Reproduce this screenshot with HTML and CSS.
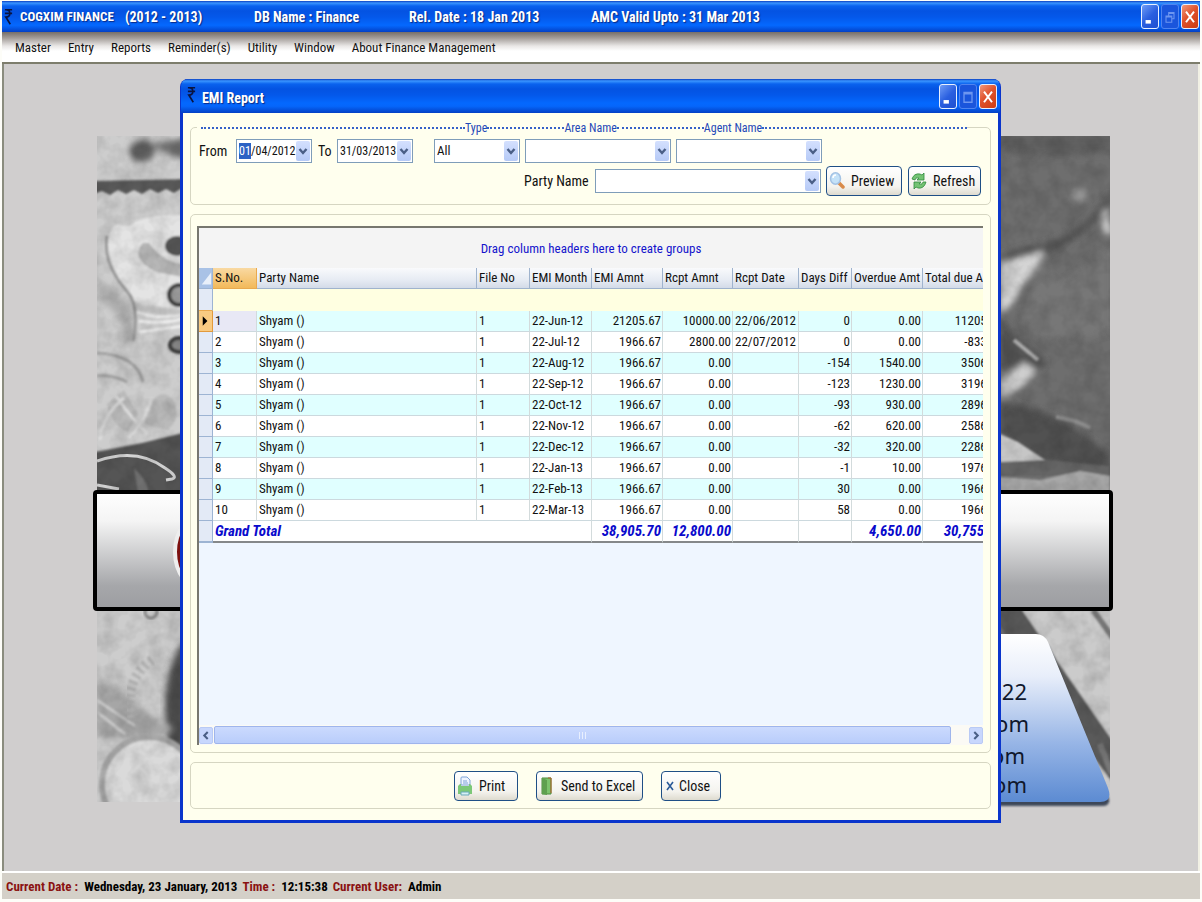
FILE: index.html
```html
<!DOCTYPE html>
<html lang="en">
<head>
<meta charset="utf-8">
<title>COGXIM FINANCE - EMI Report</title>
<link rel="stylesheet" href="styles.css">
</head>
<body>
<svg class="defs" aria-hidden="true">
  <symbol id="rupee" viewBox="0 0 10 20"><path d="M1 2h8M1 6h8M2 2c6 0 6 8 0 8l5 8" fill="none" stroke="currentColor" stroke-width="1.8"/></symbol>
  <symbol id="min" viewBox="0 0 18 24"><path d="M4 16h6v4H4z" fill="#fff"/></symbol>
  <symbol id="max" viewBox="0 0 18 24"><path d="M4.500 7.500h9v11h-9zM4.500 9h9" fill="none" stroke="#6d96f0" stroke-width="1.500"/></symbol>
  <symbol id="restore" viewBox="0 0 18 24"><path d="M7.500 11V7.500h6v7H11M4.500 11.500H11v7H4.500zM4.500 12.500H11M7.500 8.500h6" fill="none" stroke="#6d96f0" stroke-width="1.200"/></symbol>
  <symbol id="shut" viewBox="0 0 18 24"><path d="M4.500 6.500l9 12M13.500 6.500l-9 12" fill="none" stroke="#fff" stroke-width="2.200"/></symbol>
  <symbol id="chev" viewBox="0 0 14 20"><path d="M3.500 8l3.500 4 3.500-4" fill="none" stroke="#4a5f86" stroke-width="2.400"/></symbol>
</svg>
<div class="app">
  <header class="titlebar">
    <svg class="rupee"><use href="#rupee"/></svg>
    <span class="t1">COGXIM FINANCE</span><span class="t2">(2012 - 2013)</span><span class="t3">DB Name : Finance</span><span class="t4">Rel. Date : 18 Jan 2013</span><span class="t5">AMC Valid Upto : 31 Mar 2013</span>
    <div class="winbtns">
      <button class="wb" aria-label="Minimize"><svg><use href="#min"/></svg></button>
      <button class="wb dim" aria-label="Restore"><svg><use href="#restore"/></svg></button>
      <button class="wb red" aria-label="Close application"><svg><use href="#shut"/></svg></button>
    </div>
  </header>
  <nav class="menubar">
    <button>Master</button><button>Entry</button><button>Reports</button><button>Reminder(s)</button><button>Utility</button><button>Window</button><button>About Finance Management</button>
  </nav>
  <main class="desktop">
    <svg class="art" viewBox="0 64 1202 807" preserveAspectRatio="xMidYMid slice" aria-hidden="true">
      <defs>
        <clipPath id="cl"><rect x="97" y="136" width="90" height="666"/></clipPath>
        <clipPath id="cr"><rect x="990" y="136" width="120" height="666"/></clipPath>
        <filter id="b1"><feGaussianBlur stdDeviation="1"/></filter>
        <filter id="b3" x="-20%" y="-20%" width="140%" height="140%"><feGaussianBlur stdDeviation="3"/></filter>
        <filter id="grain"><feTurbulence type="fractalNoise" baseFrequency=".06" numOctaves="3" seed="4"/><feColorMatrix values="0 0 0 0 0  0 0 0 0 0  0 0 0 0 0  1.2 0 0 0 -.4"/></filter>
        <linearGradient id="steel" x1="0" y1="0" x2="0" y2="1"><stop offset="0" stop-color="#fff"/><stop offset=".25" stop-color="#f4f4f4"/><stop offset=".8" stop-color="#a6a7aa"/><stop offset="1" stop-color="#9c9da1"/></linearGradient>
        <linearGradient id="sky" x1="0" y1="0" x2="0" y2="1"><stop offset="0" stop-color="#fff"/><stop offset=".25" stop-color="#e8eefa"/><stop offset=".65" stop-color="#97b5e6"/><stop offset="1" stop-color="#5c8bd2"/></linearGradient>
      </defs>
      <g clip-path="url(#cl)">
        <rect x="97" y="136" width="90" height="666" fill="#cdcdcd"/>
        <g filter="url(#b3)">
          <ellipse cx="142" cy="151" rx="13" ry="11" fill="#5e5e5e"/><path d="M150 145l40-8v24l-20-6z" fill="#6f6f6f"/>
          <path d="M97 280q40 20 38 60l-14 8q10-30-24-50z" fill="#acacac"/>
        </g>
        <path d="M90 181l100-2v12l-8-3-8 5-8-4-8 4-8-4-8 5-8-4-8 4-8-4-8 5-8-4-12 4z" fill="#5a5a5a" filter="url(#b1)"/>
        <g filter="url(#b1)">
          <path d="M187 215q-40-2-59 11l-12-2q-12 12-8 32 10 36 34 49l45 5z" fill="#e4e4e4"/>
          <path d="M187 263q-20 4-38-20l-6 0q-14 16 14 29l30 6z" fill="#b6b6b6"/>
          <ellipse cx="177" cy="246" rx="12" ry="10" fill="#555"/>
          <circle cx="179" cy="295" r="10" fill="#999" stroke="#404040" stroke-width="4"/>
          <path d="M107 236q-4 28 19 54 14 14 7 51" fill="none" stroke="#9a9a9a" stroke-width="3"/>
          <path d="M137 312q20 8 49 2M139 321q20 4 47-3M139 332l45-6" stroke="#eee" stroke-width="3" fill="none"/>
          <ellipse cx="179" cy="345" rx="9" ry="7" fill="#888" stroke="#3d3d3d" stroke-width="4"/>
          <path d="M97 353q40 2 46 29M97 376q14-2 30 6" stroke="#a3a3a3" stroke-width="3" fill="none"/>
          <path d="M107 404l17-14 14 24-10 18q-18-8-21-28zM145 412q15-28 28-12 10 18-6 30l-22-6z" fill="#bababa"/>
          <path d="M100 440q2-24 24-42M128 438q16-14 24-40M116 396q20 28 32 38" stroke="#dedede" stroke-width="3" fill="none"/>
        </g>
        <path d="M90 453l52-10 45-11v60H90z" fill="#555" filter="url(#b1)"/>
        <path d="M97 461q40-14 68 7 14 9 7 11l-6 1M97 485l22 4" fill="none" stroke="#d4d4d4" stroke-width="3"/>
        <path d="M134 468q14 14 14 24h-10z" fill="#747474" filter="url(#b1)"/>
        <path d="M187 640q-18 12-22 60 0 60 20 100z" fill="#4c4c4c" filter="url(#b3)"/>
        <path d="M97 682q12-4 30 14l28 22 20 12-20 8-58 0z" fill="#a6a6a6" filter="url(#b3)"/>
        <path d="M97 700l38 26M97 712l28 22" stroke="#c9c9c9" stroke-width="3" filter="url(#b1)"/>
        <path d="M152 660q-30 20-20 62" fill="none" stroke="#b0b0b0" stroke-width="10" stroke-dasharray="3 4" filter="url(#b1)"/>
        <circle cx="149" cy="784" r="47" fill="#dadada" stroke="#a8a8a8" stroke-width="6" filter="url(#b1)"/>
        <circle cx="151" cy="612" r="6" fill="none" stroke="#888" stroke-width="3" filter="url(#b1)"/>
        <rect x="97" y="136" width="90" height="666" filter="url(#grain)" opacity=".2"/>
      </g>
      <g clip-path="url(#cr)">
        <rect x="990" y="136" width="120" height="666" fill="#6e6e6e"/>
        <g filter="url(#b3)">
          <path d="M990 136h120v16q-60 10-120-4z" fill="#606060"/>
          <path d="M1110 192q-34 50-84 55l-24 8v10q60-4 108-58z" fill="#555"/>
          <path d="M1000 263l44-12q-6 20-22 34-6 20-22 28z" fill="#d4d4d4"/>
          <circle cx="1080" cy="195" r="7" fill="#9a9a9a"/>
          <path d="M1106 206l6 30-8-4q-4-14 2-26z" fill="#d8d8d8"/>
          <path d="M1044 262q6 20 20 20l46-40v90q-60 20-90-10z" fill="#777"/>
          <path d="M1000 320l46 42-14 16q-20-14-32-8z" fill="#555"/>
          <path d="M1000 382l24-20 12 8q-10 20-36 28z" fill="#cfcfcf"/>
          <path d="M1000 402q60 6 110 54v18l-70-14-40-26z" fill="#515151"/>
        </g>
        <g filter="url(#b1)">
          <path d="M1014 340l24 20" stroke="#aaa" stroke-width="4"/>
          <path d="M1056 417q18 2 34 11" fill="none" stroke="#8c8c8c" stroke-width="4"/>
          <path d="M1000 434l18 8 30 20h-48z" fill="#c6c6c6"/>
          <path d="M1000 462l44-2 66 6v10H1000z" fill="#656565"/>
          <path d="M1000 477l40 3 40-9 30 5v16H1000z" fill="#a6a6a6"/>
          <path d="M1022 610h98v220z" fill="#cbcbcb"/>
          <path d="M1000 610h22l90 130v42l-50-66-62-90z" fill="#5a5a5a"/>
          <path d="M1093 610l20 28" stroke="#777" stroke-width="6"/>
          <path d="M1100 744l12 30" stroke="#777" stroke-width="6"/>
        </g>
        <rect x="990" y="136" width="120" height="666" filter="url(#grain)" opacity=".2"/>
      </g>
      <rect x="95" y="492" width="1016" height="117" rx="2" fill="url(#steel)" stroke="#000" stroke-width="4"/>
      <ellipse cx="204" cy="552" rx="29" ry="38" fill="#7c1010" stroke="#eee" stroke-width="4"/>
      <path d="M900 640h138q8 0 12 9l58 147q4 10-6 10H900z" fill="#3c4658" filter="url(#b1)"/>
      <path d="M900 634h136q8 0 12 8l60 146q5 14-8 14H900z" fill="url(#sky)"/>
      <g class="arttext" text-anchor="end"><text x="1027" y="700">22</text><text x="1029" y="732">om</text><text x="1025" y="764">om</text><text x="1027" y="793">om</text></g>
    </svg>

    <section class="dialog" aria-label="EMI Report">
      <header class="dlgtitle">
        <svg class="rupee"><use href="#rupee"/></svg><h1>EMI Report</h1>
        <div class="winbtns">
          <button class="wb" aria-label="Minimize report"><svg><use href="#min"/></svg></button>
          <button class="wb dim" aria-label="Maximize report"><svg><use href="#max"/></svg></button>
          <button class="wb red" aria-label="Close report"><svg><use href="#shut"/></svg></button>
        </div>
      </header>
      <div class="dlgbody">
        <form class="box filters">
          <div class="captions">
            <i class="dots d1"></i><label for="type">Type</label><i class="dots d2"></i><label for="area">Area Name</label><i class="dots d3"></i><label for="agent">Agent Name</label><i class="dots"></i>
          </div>
          <div class="line">
            <label class="from" for="d1">From</label>
            <span class="field date"><input class="day" id="d1" value="01" aria-label="From day"><input class="rest" value="/04/2012" aria-label="From month and year"><button type="button" class="drop" aria-label="Open from calendar"><svg><use href="#chev"/></svg></button></span>
            <label class="to" for="d2">To</label>
            <span class="field date"><input id="d2" value="31/03/2013"><button type="button" class="drop" aria-label="Open to calendar"><svg><use href="#chev"/></svg></button></span>
            <span class="field type"><select id="type"><option>All</option></select><span class="drop"><svg><use href="#chev"/></svg></span></span>
            <span class="field wide"><select id="area"><option></option></select><span class="drop"><svg><use href="#chev"/></svg></span></span>
            <span class="field wide"><select id="agent"><option></option></select><span class="drop"><svg><use href="#chev"/></svg></span></span>
          </div>
          <div class="line second">
            <label class="plabel" for="party">Party Name</label>
            <span class="field party"><select id="party"><option></option></select><span class="drop"><svg><use href="#chev"/></svg></span></span>
            <button type="button" class="btn preview"><svg class="ic" viewBox="0 0 16 20"><path d="M9 11l5 5" stroke="#d98b4a" stroke-width="3.500" stroke-linecap="round"/><ellipse cx="6.500" cy="7.500" rx="5" ry="5.800" fill="#c4e2f8" stroke="#a3c2e4" stroke-width="1.500"/><path d="M4 7q0-3 3-3" stroke="#fff" stroke-width="1.500" fill="none"/></svg>Preview</button>
            <button type="button" class="btn refresh"><svg class="ic" viewBox="0 0 16 20"><path d="M1 8q2-6 8-5l2 1 2-2v7H6l2-2q-4-1-4 2z" fill="#74c374" stroke="#2f8a3c" stroke-width=".8"/><path d="M15 11q-2 7-8 6l-2-1-2 2v-7h7l-2 2q4 1 4-2z" fill="#74c374" stroke="#2f8a3c" stroke-width=".8"/></svg>Refresh</button>
          </div>
        </form>

        <div class="box gridbox">
          <div class="grid">
            <div class="drag">Drag column headers here to create groups</div>
            <div class="clip">
            <table>
              <colgroup><col class="c0"><col class="c1"><col class="c2"><col class="c3"><col class="c4"><col class="c5"><col class="c6"><col class="c7"><col class="c8"><col class="c9"><col class="c10"></colgroup>
              <thead>
                <tr><th class="corner"><svg viewBox="0 0 15 20"><path d="M13 4v13H3z" fill="#e9f0fa"/></svg></th><th class="hot">S.No.</th><th>Party Name</th><th>File No</th><th>EMI Month</th><th>EMI Amnt</th><th>Rcpt Amnt</th><th>Rcpt Date</th><th>Days Diff</th><th>Overdue Amt</th><th>Total due Amt</th></tr>
              </thead>
              <tbody>
                <tr class="filter"><td class="rh"></td><td colspan="10"></td></tr>
                <tr class="odd"><td class="rh cur"><svg viewBox="0 0 15 20"><path d="M4 5l5 5-5 5z" fill="#000"/></svg></td><td class="sel">1</td><td>Shyam ()</td><td>1</td><td>22-Jun-12</td><td class="n">21205.67</td><td class="n">10000.00</td><td>22/06/2012</td><td class="n">0</td><td class="n">0.00</td><td class="n">11205.67</td></tr>
                <tr><td class="rh"></td><td>2</td><td>Shyam ()</td><td>1</td><td>22-Jul-12</td><td class="n">1966.67</td><td class="n">2800.00</td><td>22/07/2012</td><td class="n">0</td><td class="n">0.00</td><td class="n">-833.33</td></tr>
                <tr class="odd"><td class="rh"></td><td>3</td><td>Shyam ()</td><td>1</td><td>22-Aug-12</td><td class="n">1966.67</td><td class="n">0.00</td><td></td><td class="n">-154</td><td class="n">1540.00</td><td class="n">3506.67</td></tr>
                <tr><td class="rh"></td><td>4</td><td>Shyam ()</td><td>1</td><td>22-Sep-12</td><td class="n">1966.67</td><td class="n">0.00</td><td></td><td class="n">-123</td><td class="n">1230.00</td><td class="n">3196.67</td></tr>
                <tr class="odd"><td class="rh"></td><td>5</td><td>Shyam ()</td><td>1</td><td>22-Oct-12</td><td class="n">1966.67</td><td class="n">0.00</td><td></td><td class="n">-93</td><td class="n">930.00</td><td class="n">2896.67</td></tr>
                <tr><td class="rh"></td><td>6</td><td>Shyam ()</td><td>1</td><td>22-Nov-12</td><td class="n">1966.67</td><td class="n">0.00</td><td></td><td class="n">-62</td><td class="n">620.00</td><td class="n">2586.67</td></tr>
                <tr class="odd"><td class="rh"></td><td>7</td><td>Shyam ()</td><td>1</td><td>22-Dec-12</td><td class="n">1966.67</td><td class="n">0.00</td><td></td><td class="n">-32</td><td class="n">320.00</td><td class="n">2286.67</td></tr>
                <tr><td class="rh"></td><td>8</td><td>Shyam ()</td><td>1</td><td>22-Jan-13</td><td class="n">1966.67</td><td class="n">0.00</td><td></td><td class="n">-1</td><td class="n">10.00</td><td class="n">1976.67</td></tr>
                <tr class="odd"><td class="rh"></td><td>9</td><td>Shyam ()</td><td>1</td><td>22-Feb-13</td><td class="n">1966.67</td><td class="n">0.00</td><td></td><td class="n">30</td><td class="n">0.00</td><td class="n">1966.67</td></tr>
                <tr><td class="rh"></td><td>10</td><td>Shyam ()</td><td>1</td><td>22-Mar-13</td><td class="n">1966.67</td><td class="n">0.00</td><td></td><td class="n">58</td><td class="n">0.00</td><td class="n">1966.67</td></tr>
              </tbody>
              <tfoot><tr><td class="rh"></td><td colspan="4">Grand Total</td><td class="n">38,905.70</td><td class="n">12,800.00</td><td></td><td></td><td class="n">4,650.00</td><td class="n">30,755.70</td></tr></tfoot>
            </table>
            </div>
            <div class="void"></div>
            <div class="hscroll">
              <button class="sb" aria-label="Scroll left"><svg viewBox="0 0 14 16"><path d="M9 4L5 8l4 4" fill="none" stroke="#4a5f86" stroke-width="2.400"/></svg></button>
              <div class="thumb"><i></i><i></i><i></i></div>
              <button class="sb" aria-label="Scroll right"><svg viewBox="0 0 14 16"><path d="M5 4l4 4-4 4" fill="none" stroke="#4a5f86" stroke-width="2.400"/></svg></button>
            </div>
          </div>
        </div>

        <div class="box actions">
          <button class="btn print"><svg class="ic" viewBox="0 0 16 20"><path d="M4 9V2q0-1 1-1h5l3 3v5z" fill="#eef4ff" stroke="#7ea3d8"/><path d="M6 5h4M6 7h5" stroke="#7ea3d8"/><path d="M1 10l2-2h1v2h8V8h1l2 2v8H1z" fill="#7cc878"/><path d="M4 16h8v3H4z" fill="#d6f0f5" stroke="#6aa9b9"/></svg>Print</button>
          <button class="btn excel"><svg class="ic" viewBox="0 0 16 20"><path d="M3 2h9v16H3z" fill="#7cc36c" stroke="#4c8a3c"/><path d="M3 2l5 2v15l-5-1z" fill="#5fa04f"/><path d="M9 2h3v15" fill="none" stroke="#b5622c"/></svg>Send to Excel</button>
          <button class="btn close"><svg class="ic" viewBox="0 0 10 20"><path d="M2 6l6 8M8 6l-6 8" stroke="#2b5a98" stroke-width="1.600"/></svg>Close</button>
        </div>
      </div>
    </section>
  </main>
  <footer class="status">
    <span class="k">Current Date :</span><span class="v">Wednesday, 23 January, 2013</span><span class="k">Time :</span><span class="v">12:15:38</span><span class="k">Current User:</span><span class="v">Admin</span>
  </footer>
</div>
</body>
</html>
```
FILE: styles.css
```css
* { box-sizing: border-box; }
html, body { height: 100%; }
body {
  margin: 0;
  background: #fdfdf8;
  font-family: "Roboto Condensed", "Liberation Sans Narrow", Roboto, sans-serif;
  font-size: 13px;
  line-height: 16px;
  color: #111;
}
button, input, select { font: inherit; color: inherit; padding: 0; margin: 0; border: 0; background: none; border-radius: 0; outline: 0; }
svg { display: block; }
.defs { position: absolute; width: 0; height: 0; }

.app { display: flex; flex-direction: column; height: 100%; padding: 1px 2px 3px; }

.titlebar, .dlgtitle {
  display: flex;
  align-items: center;
  color: #fff;
  font-size: 14px;
  font-weight: bold;
  text-shadow: 1px 1px 1px #0a2a86;
  background: linear-gradient(#0b3fc0 0, #3a95ff 2px, #0a62ee 5px, #0453e2 10px, #0458ea 16px, #0468fe 24px, #0566fb 80%, #0340c4);
}
.titlebar { flex: none; height: 31px; padding-right: 1px; white-space: nowrap; }
.rupee { width: 9px; height: 18px; margin: 0 7px 0 2px; color: #0a1440; }
.t1 { width: 105px; font-size: 13px; }
.t2 { width: 129px; }
.t3 { width: 155px; }
.t4 { width: 182px; }
.winbtns { display: flex; gap: 2px; margin-left: auto; }
.wb { width: 18px; height: 25px; border: 1px solid #e8f0ff; border-radius: 3px; background: linear-gradient(135deg, #6f9cf6, #2a5fe0 50%, #1e4fd0); }
.wb svg { width: 16px; height: 23px; }
.wb.dim { border-color: #4f84f0; background: #1a55dc; }
.wb.red { background: linear-gradient(135deg, #f0987c, #e0522c 45%, #cc3c12); }

.menubar {
  flex: none;
  display: flex;
  align-items: center;
  gap: 17px;
  height: 32px;
  padding: 2px 13px 0;
  border-bottom: 2px solid #7d7d6c;
  background: linear-gradient(#766e68 0, #a39d99 6px, #e9e7e6 14px, #fff 19px);
}

.desktop {
  position: relative;
  flex: 1;
  min-height: 0;
  overflow: hidden;
  background: #d0cece;
  border-left: 2px solid #8a8c7e;
  border-right: 2px solid #f1f0e4;
}
.art { position: absolute; top: 0; left: -4px; width: calc(100% + 8px); height: 100%; }
.arttext { font: 22px "Noto Sans", sans-serif; fill: #10182c; }

.dialog {
  position: absolute;
  top: 15px;
  left: 176px;
  right: 197px;
  bottom: 48px;
  display: flex;
  flex-direction: column;
  border: 3px solid #0a35cc;
  border-top: 0;
  border-radius: 8px 8px 0 0;
  background: #0a35cc;
}
.dlgtitle { flex: none; height: 34px; margin: 0 -2px; padding-right: 3px; border-radius: 7px 7px 0 0; }
.dlgtitle .rupee { margin: 0 6px 3px 6px; }
.dlgtitle h1 { margin: 3px 0 0; font-size: 14px; line-height: 16px; }
.dlgbody { flex: 1; min-height: 0; display: flex; flex-direction: column; gap: 9px; padding: 14px 7px 11px; background: #ffffee; }
.box { border: 1px solid #d6d6c2; border-radius: 5px; }

.filters { flex: none; height: 78px; padding-right: 9px; }
.captions { display: flex; align-items: center; height: 12px; margin: -6px 14px 0 6px; padding-left: 4px; background: #ffffee; color: #1f49b8; font-size: 12px; line-height: 12px; white-space: nowrap; }
.dots { flex: 1; border-top: 2px dotted #3561c8; }
.d1 { flex: none; width: 264px; }
.d2 { flex: none; width: 77px; }
.d3 { flex: none; width: 87px; }
.line { display: flex; align-items: center; margin-top: 5px; }
.line.second { margin-top: 3px; padding-left: 333px; }
.from, .to, .plabel { flex: none; font-size: 14px; white-space: nowrap; }
.from { width: 37px; margin-left: 8px; }
.to { width: 19px; margin-left: 6px; }
.field { position: relative; display: flex; align-items: center; height: 24px; border: 1px solid #7f9db9; background: #fff; flex: none; }
.field.date { width: 76px; padding-left: 2px; font-size: 12px; }
.date input { flex: 1; min-width: 0; width: 100%; }
.date .day { flex: none; width: 12px; background: #2c62c4; color: #fff; }
.field.type { width: 86px; margin-left: 21px; }
.field.wide { width: 146px; margin-left: 5px; }
.field.party { flex: 1; }
.field select { appearance: none; width: 100%; height: 22px; padding-left: 2px; }
.drop { flex: none; width: 14px; height: 20px; margin-right: 1px; border-radius: 2px; background: linear-gradient(#d4e0fe, #b6caf7); }
.drop svg { width: 14px; height: 20px; }
select + .drop { position: absolute; top: 1px; right: 0; pointer-events: none; }
.plabel { width: 71px; }
.btn { flex: none; display: flex; align-items: center; height: 30px; border: 1px solid #1f4f86; border-radius: 4px; background: linear-gradient(#fff, #f4f3ee 70%, #dedbcf); font-size: 14px; white-space: nowrap; }
.ic { flex: none; width: 16px; height: 20px; margin: 0 6px 0 2px; }
.preview { width: 76px; margin-left: 5px; }
.refresh { width: 73px; margin-left: 6px; }

.gridbox { flex: 1; min-height: 0; padding: 11px 7px 7px 6px; }
.grid { height: 100%; display: flex; flex-direction: column; border-top: 2px solid #77776f; border-left: 2px solid #77776f; background: #eff6ff; overflow: hidden; }
.drag { flex: none; height: 40px; padding: 13px 0 0; text-align: center; color: #1414cc; background: #f4f4f4; }
.clip { flex: none; overflow: hidden; }
table { width: 806px; table-layout: fixed; border-collapse: separate; border-spacing: 0; background: #fff; }
.c0 { width: 14px; } .c1 { width: 44px; } .c3 { width: 53px; } .c4 { width: 62px; } .c5 { width: 71px; }
.c6 { width: 70px; } .c7 { width: 66px; } .c8 { width: 53px; } .c9 { width: 71px; } .c10 { width: 82px; }
th, td { height: 21px; padding: 0 2px; border-right: 1px solid #d3dbdc; border-bottom: 1px solid #ccd9de; text-align: left; font-weight: normal; white-space: nowrap; line-height: 16px; overflow: hidden; }
th { background: linear-gradient(#f9fafc, #e6ebf3 60%, #d3dbe8); border-right-color: #9fb3cd; border-bottom-color: #9fb3cd; }
th.hot { background: linear-gradient(#f9d9a2, #f2b95a); border-color: #e9a94f; }
th.corner, td.rh { padding: 0; background: #e3eaf6; border-color: #9db4d3; }
th.corner { background: #a9c2e6; }
th.corner svg, .rh svg { width: 14px; height: 20px; }
td.n { text-align: right; padding: 0 1px; }
.filter td { height: 22px; background: #ffffe1; border-right: 0; border-bottom: 0; }
.filter td.rh { background: #e3eaf6; border-right: 1px solid #9db4d3; border-bottom: 1px solid #e9a94f; }
.odd td { background: #e0ffff; }
.odd td.rh { background: #e3eaf6; }
.odd td.cur { background: #f9cb82; border-color: #e29a3c; }
.odd td.sel { background: #e8e8f5; }
tfoot td { height: 22px; border-bottom: 2px solid #85888a; color: #0a0acc; font-weight: bold; font-style: italic; font-size: 15px; }
.void { flex: 1; }
.hscroll { flex: none; height: 20px; display: flex; align-items: center; background: #fbfaf5; }
.sb { flex: none; width: 14px; height: 17px; border: 1px solid #b9caf5; border-radius: 2px; background: #c8d7fd; }
.sb svg { width: 12px; height: 15px; }
.thumb { flex: 1; display: flex; justify-content: center; align-items: center; gap: 2px; height: 18px; margin: 0 18px 0 1px; border: 1px solid #9fb5ec; border-radius: 2px; background: linear-gradient(#cbdafe, #b9cdfb); }
.thumb i { width: 1px; height: 7px; background: #e8effe; }

.actions { flex: none; height: 47px; display: flex; align-items: center; justify-content: center; gap: 18px; padding-right: 6px; }
.print { width: 64px; }
.excel { width: 107px; }
.close { width: 60px; }
.close .ic { width: 10px; margin: 0 4px 0 3px; }

.status { flex: none; display: flex; align-items: center; height: 28px; padding: 2px 4px 0; border-top: 2px solid #fff; background: #d4d0c8; font-weight: bold; font-size: 13px; white-space: nowrap; }
.k { color: #8a1212; margin-right: 6px; }
.v { margin-right: 5px; color: #000; }
```
